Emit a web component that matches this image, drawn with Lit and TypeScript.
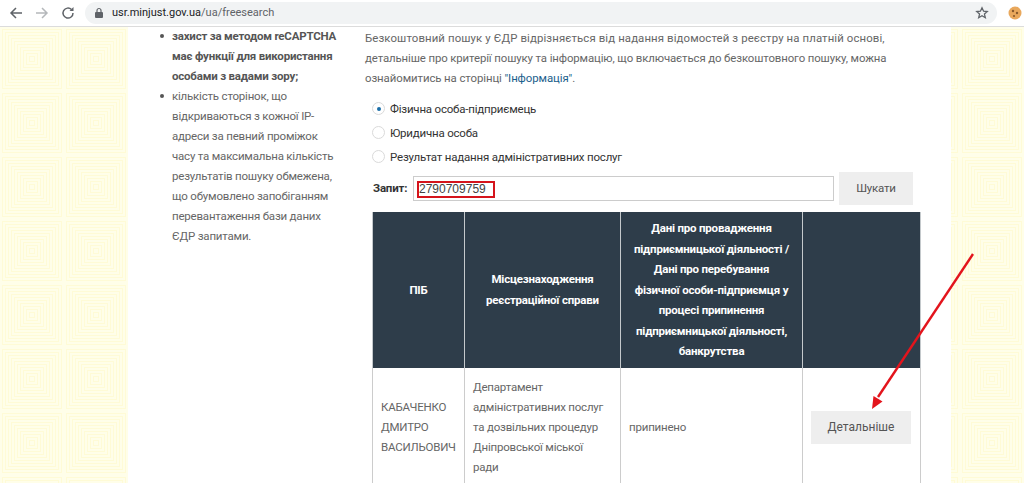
import { LitElement, html, css, unsafeCSS } from "lit";
import { customElement } from "lit/decorators.js";

const rings = Array.from({ length: 10 }, (_, i) => {
  const p = 2.5 + i * 3;
  const s = 64 - 2 * p;
  return `<rect x='${p}' y='${p}' width='${s}' height='${s}'/>`;
}).join("");
const tile = `<svg xmlns='http://www.w3.org/2000/svg' width='64' height='64'><g fill='none' stroke='%23fffbd6' stroke-width='1'>${rings}</g></svg>`;
const patternUrl = unsafeCSS(`url("data:image/svg+xml,${tile}")`);

@customElement("app-root")
export class AppRoot extends LitElement {
  static styles = css`
    :host { display: block; width: 1024px; height: 483px; overflow: hidden; position: relative; background: #fff; font-family: "Roboto", sans-serif; font-size: 11.5px; letter-spacing: -0.2px; color: #5c5c5c; }
    .bar { height: 26px; border-bottom: 1px solid #dcdcdc; display: flex; align-items: center; background: #fff; letter-spacing: 0; }
    .nav { width: 20px; height: 20px; display: block; flex: none; }
    .navs { display: flex; gap: 6.5px; padding-left: 4.5px; width: 85px; box-sizing: border-box; flex: none; }
    .omni { width: 912px; height: 22px; background: #f1f3f4; border-radius: 11px; display: flex; align-items: center; padding: 0 8px 0 9px; box-sizing: border-box; flex: none; margin-top: -1px; }
    .url { font-size: 11px; color: #5f6368; margin-left: 8px; flex: 1; }
    .url b { font-weight: 400; color: #202124; }
    .cookie { margin-left: 11px; margin-top: -1px; flex: none; }
    .page { height: 456px; display: flex; overflow: hidden; background-color: #fffee9; background-image: ${patternUrl}; }
    .wrap { width: 823px; background: #fff; display: flex; margin-left: 128px; }
    .side { width: 237px; flex: none; box-sizing: border-box; padding: 0 0 0 26px; line-height: 20px; margin-top: -1px; }
    .side ul { margin: 0; padding: 0 0 0 18px; white-space: nowrap; color: #666; list-style: none; }
    .side li { position: relative; }
    .side li::before { content: ""; position: absolute; left: -12px; top: 8px; width: 4px; height: 4px; border-radius: 50%; background: #555; }
    .side b { color: #555; }
    .main { flex: 1; }
    .intro { width: 548px; line-height: 20px; margin: 0; padding-top: 1px; white-space: nowrap; color: #666; font-size: 11.4px; }
    .l1 { letter-spacing: 0.11px; }
    .l2 { letter-spacing: -0.11px; }
    .l3 { letter-spacing: -0.08px; }
    a { color: #1b5e8c; text-decoration: none; }
    .radios { margin-top: 8.5px; padding-left: 7px; color: #333; }
    .radio { display: flex; align-items: center; height: 24px; }
    .dot { width: 13px; height: 13px; border: 1px solid #dadada; border-radius: 50%; box-sizing: border-box; display: flex; align-items: center; justify-content: center; margin-right: 5px; background: #fff; flex: none; }
    .dot i { width: 4px; height: 4px; border-radius: 50%; background: #1a6ea8; display: block; }
    .query { display: flex; align-items: center; margin-top: 3px; padding-left: 8px; height: 33px; }
    .query b { width: 40px; flex: none; color: #333; }
    .input { width: 421px; height: 25px; box-sizing: border-box; border: 1px solid #ccc; position: relative; padding-left: 5px; line-height: 24px; color: #444; font-family: "Liberation Sans", sans-serif; font-size: 12px; letter-spacing: 0; }
    .mark { position: absolute; left: 3px; top: 4px; width: 78px; height: 17px; border: 2px solid #d5141c; box-sizing: border-box; }
    .go { margin-left: 5px; width: 74px; height: 33px; background: #eee; display: flex; align-items: center; justify-content: center; color: #555; }
    table { margin: 7px 0 0 7px; width: 548px; border-collapse: collapse; table-layout: fixed; }
    th { background: #2e3d4a; color: #fff; font-weight: 700; text-align: center; line-height: 20.5px; padding: 6.5px 4px; border: 1px solid #c4c9cc; border-top: 0; border-bottom: 0; white-space: nowrap; }
    td { border: 1px solid #ccc; border-top: 0; padding: 9px 8px; line-height: 20px; vertical-align: middle; color: #666; white-space: nowrap; }
    .btn { width: 100px; height: 33px; background: #eee; display: flex; align-items: center; justify-content: center; color: #555; font-size: 12px; letter-spacing: 0; }
    .arrow { position: absolute; left: 0; top: 0; width: 1024px; height: 483px; pointer-events: none; }
  `;

  render() {
    return html`
      <div class="bar">
        <div class="navs">
          <svg class="nav" viewBox="0 0 20 20"><path d="M17 10H6M11 5l-5 5 5 5" fill="none" stroke="#5f6368" stroke-width="1.5"/></svg>
          <svg class="nav" viewBox="0 0 20 20"><path d="M5 10h11M11 5l5 5-5 5" fill="none" stroke="#b5b8bb" stroke-width="1.5"/></svg>
          <svg class="nav" viewBox="0 0 20 20"><path d="M15 10a5 5 0 1 1-1.5-3.5" fill="none" stroke="#5f6368" stroke-width="1.5"/><path d="M15.5 4v4h-4z" fill="#5f6368"/></svg>
        </div>
        <div class="omni">
          <svg width="10" height="12" viewBox="0 0 10 12"><rect x="1" y="5" width="8" height="6" rx="1" fill="#5f6368"/><path d="M3 5V3.5a2 2 0 0 1 4 0V5" fill="none" stroke="#5f6368" stroke-width="1.2"/></svg>
          <span class="url"><b>usr.minjust.gov.ua</b>/ua/freesearch</span>
          <svg width="14" height="14" viewBox="0 0 24 24"><path d="M12 3l2.7 6 6.3.6-4.8 4.2 1.5 6.4L12 16.8l-5.7 3.4 1.5-6.4L3 9.6 9.3 9z" fill="none" stroke="#5f6368" stroke-width="2.2"/></svg>
        </div>
        <svg class="cookie" width="14" height="14" viewBox="0 0 14 14"><circle cx="7" cy="7" r="6.5" fill="#e9a85c"/><circle cx="5" cy="5" r="1.2" fill="#8a5a2b"/><circle cx="9" cy="7" r="1.2" fill="#8a5a2b"/><circle cx="6" cy="10" r="1.1" fill="#8a5a2b"/></svg>
      </div>
      <div class="page">
        <div class="wrap">
          <div class="side">
            <ul>
              <li><b>захист за методом reCAPTCHA<br/>має функції для використання<br/>особами з вадами зору;</b></li>
              <li>кількість сторінок, що<br/>відкриваються з кожної IP-<br/>адреси за певний проміжок<br/>часу та максимальна кількість<br/>результатів пошуку обмежена,<br/>що обумовлено запобіганням<br/>перевантаження бази даних<br/>ЄДР запитами.</li>
            </ul>
          </div>
          <div class="main">
            <p class="intro"><span class="l1">Безкоштовний пошук у ЄДР відрізняється від надання відомостей з реєстру на платній основі,</span><br/><span class="l2">детальніше про критерії пошуку та інформацію, що включається до безкоштовного пошуку, можна</span><br/><span class="l3">ознайомитись на сторінці <a>"Інформація"</a>.</span></p>
            <div class="radios">
              <div class="radio"><span class="dot"><i></i></span>Фізична особа-підприємець</div>
              <div class="radio"><span class="dot"></span>Юридична особа</div>
              <div class="radio"><span class="dot"></span>Результат надання адміністративних послуг</div>
            </div>
            <div class="query"><b>Запит:</b><div class="input">2790709759<span class="mark"></span></div><div class="go">Шукати</div></div>
            <table>
              <colgroup><col style="width:92px"/><col style="width:156px"/><col style="width:182px"/><col style="width:118px"/></colgroup>
              <tr>
                <th>ПІБ</th>
                <th>Місцезнаходження<br/>реєстраційної справи</th>
                <th>Дані про провадження<br/>підприємницької діяльності /<br/>Дані про перебування<br/>фізичної особи-підприємця у<br/>процесі припинення<br/>підприємницької діяльності,<br/>банкрутства</th>
                <th></th>
              </tr>
              <tr>
                <td>КАБАЧЕНКО<br/>ДМИТРО<br/>ВАСИЛЬОВИЧ</td>
                <td>Департамент<br/>адміністративних послуг<br/>та дозвільних процедур<br/>Дніпровської міської<br/>ради</td>
                <td>припинено</td>
                <td><div class="btn">Детальніше</div></td>
              </tr>
            </table>
          </div>
        </div>
      </div>
      <svg class="arrow" viewBox="0 0 1024 483">
        <path d="M973 254L878 397" stroke="#e3141c" stroke-width="2.4" fill="none"/>
        <path d="M872 409l1.5-13 9 5.5z" fill="#e3141c"/>
      </svg>
    `;
  }
}
